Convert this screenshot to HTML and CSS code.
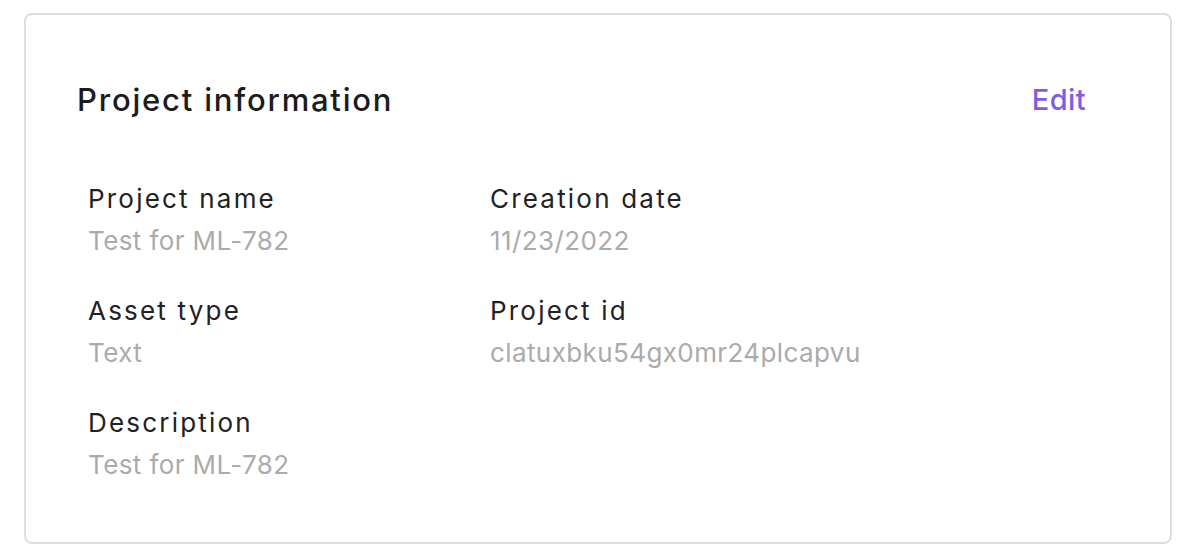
FILE: index.html
```html
<!DOCTYPE html>
<html>
<head>
<meta charset="utf-8">
<link rel="stylesheet" href="styles.css">
</head>
<body>
<div class="card">
  <div class="header">
    <h2 class="title">Project information</h2>
    <a class="edit">Edit</a>
  </div>
  <div class="grid">
    <div class="field">
      <div class="label">Project name</div>
      <div class="value">Test for ML-782</div>
    </div>
    <div class="field">
      <div class="label">Creation date</div>
      <div class="value">11/23/2022</div>
    </div>
    <div class="field">
      <div class="label">Asset type</div>
      <div class="value">Text</div>
    </div>
    <div class="field">
      <div class="label">Project id</div>
      <div class="value">clatuxbku54gx0mr24plcapvu</div>
    </div>
    <div class="field">
      <div class="label">Description</div>
      <div class="value">Test for ML-782</div>
    </div>
  </div>
</div>
</body>
</html>
```

FILE: styles.css
```css
html, body { margin: 0; padding: 0; background: #fff; }
body {
  padding: 13px 14px 0 24px;
  font-family: Inter, "Liberation Sans", sans-serif;
  color: #1c1c1c;
}
.card {
  box-sizing: border-box;
  width: 1148px;
  height: 531px;
  border: 2px solid #dedede;
  border-radius: 8px;
  padding: 64px 84px 0 51px;
}
.header {
  display: flex;
  justify-content: space-between;
  align-items: center;
  height: 40px;
}
.title {
  margin: 0;
  font-size: 31px;
  font-weight: 500;
  letter-spacing: 1.8px;
  color: #1c1c1c;
}
.edit {
  font-size: 29px;
  font-weight: 500;
  letter-spacing: 0.4px;
  color: #7d5de6;
  cursor: pointer;
}
.grid {
  display: grid;
  grid-template-columns: 402px 1fr;
  row-gap: 38px;
  padding: 64px 0 0 11px;
}
.field {
  display: flex;
  flex-direction: column;
  gap: 10px;
}
.label {
  font-size: 26px;
  line-height: 32px;
  color: #222;
  letter-spacing: 2.2px;
}
.value {
  font-size: 26px;
  line-height: 32px;
  color: #ababab;
  letter-spacing: 0.4px;
}
```
